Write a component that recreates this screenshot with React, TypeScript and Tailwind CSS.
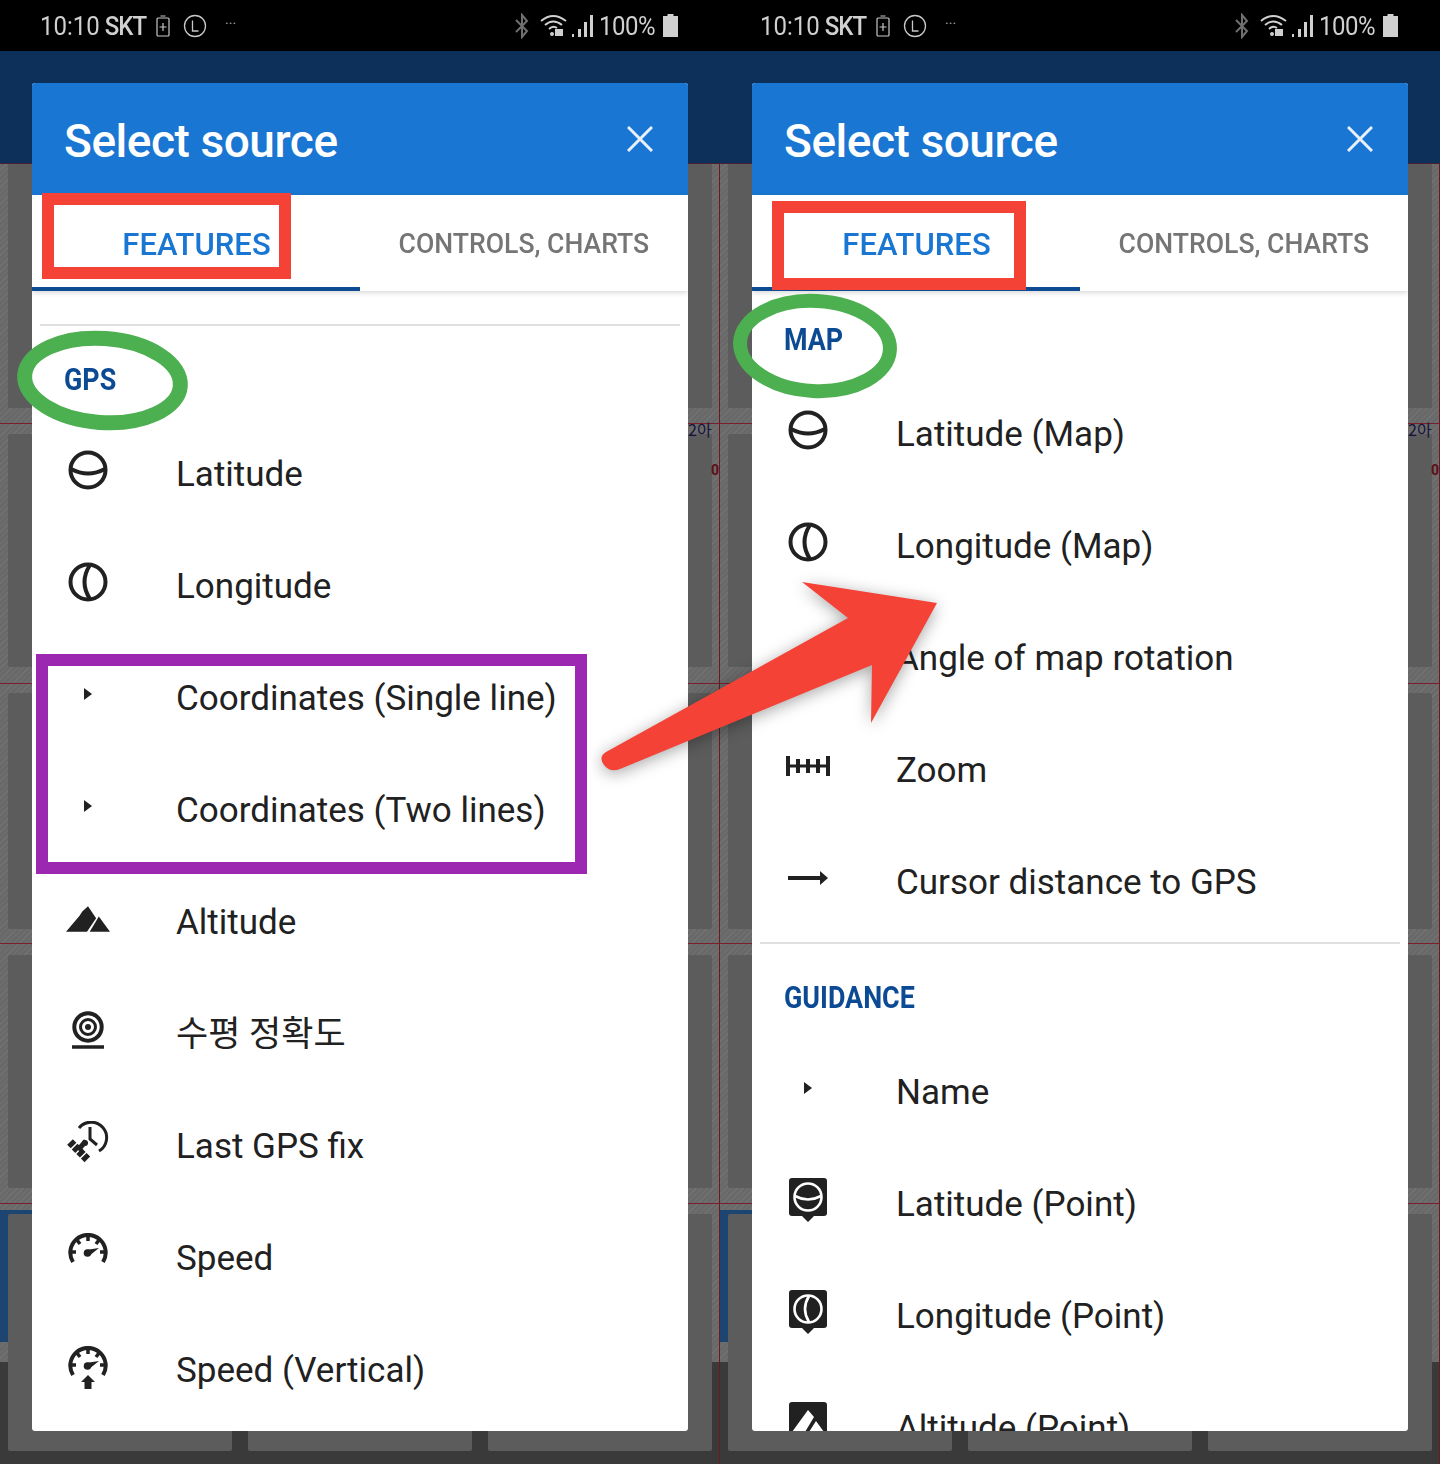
import React from "react";

const Lat = () => (
  <svg viewBox="0 0 40 40" className="w-[40px] h-[40px]" fill="none" stroke="#212121" strokeWidth="4">
    <circle cx="20" cy="20" r="17.5" />
    <path d="M3 19 Q20 28 37 19" />
  </svg>
);
const Lon = () => (
  <svg viewBox="0 0 40 40" className="w-[40px] h-[40px]" fill="none" stroke="#212121" strokeWidth="4">
    <circle cx="20" cy="20" r="17.5" />
    <path d="M22 3 Q11 20 22 37" />
  </svg>
);
const Tri = () => (
  <svg viewBox="0 0 8 12" className="w-[8px] h-[12px]"><path d="M0 0 L8 6 L0 12 Z" fill="#212121" /></svg>
);
const Alt = () => (
  <svg viewBox="0 0 130 75" className="w-[44px] h-[26px] mt-[2px]" fill="#212121">
    <path d="M0 75 L40 28 L48 15 L65 0 L89 35 L62 75 Z" />
    <path d="M97 30 L130 75 L70 75 Z" />
  </svg>
);
const Target = () => (
  <svg viewBox="0 0 32 38" className="w-[32px] h-[38px]" fill="none" stroke="#212121">
    <circle cx="16" cy="16" r="13.7" strokeWidth="4" />
    <circle cx="16" cy="16" r="7.5" strokeWidth="3" />
    <circle cx="16" cy="16" r="3" fill="#212121" stroke="none" />
    <path d="M0 36 H32" strokeWidth="3.5" />
  </svg>
);
const Fix = () => (
  <svg viewBox="0 0 42 42" className="w-[42px] h-[42px]" fill="none" stroke="#212121">
    <path d="M12 7 A15.5 15.5 0 1 1 32 30" strokeWidth="3" />
    <path d="M23 6 V18 L30 24" strokeWidth="3" />
    <path d="M3 21 L21 39" strokeWidth="8" strokeDasharray="5 1.5" />
    <path d="M11 29 L19 20" strokeWidth="5" />
    <circle cx="18" cy="22" r="3" fill="#212121" stroke="none" />
  </svg>
);
const Gauge = () => (
  <>
    <path d="M5 29 A17.7 17.7 0 1 1 35 29" strokeWidth="4" stroke="#212121" fill="none" />
    <path d="M20 3 V8 M9 7 L12 11 M31 7 L28 11 M3 19 H8 M37 19 H32" strokeWidth="3.5" stroke="#212121" fill="none" />
    <circle cx="19.5" cy="20" r="3.8" fill="#212121" />
    <path d="M18 17 L31 15 L21 23 Z" fill="#212121" />
  </>
);
const Speed = () => (
  <svg viewBox="0 0 40 44" className="w-[40px] h-[44px] mt-[3px]"><Gauge /></svg>
);
const SpeedV = () => (
  <svg viewBox="0 0 40 44" className="w-[40px] h-[44px] mt-[4px]">
    <Gauge />
    <path d="M20 29 L27 36 H23.5 V43 H16.5 V36 H13 Z" fill="#212121" />
  </svg>
);
const ZoomI = () => (
  <svg viewBox="0 0 44 20" className="w-[44px] h-[20px]" fill="#212121">
    <rect x="0" y="0" width="4" height="20" />
    <rect x="40" y="0" width="4" height="20" />
    <rect x="10" y="3" width="4" height="14" />
    <rect x="20" y="3" width="4" height="14" />
    <rect x="30" y="3" width="4" height="14" />
    <rect x="2" y="8.5" width="40" height="3" />
  </svg>
);
const Cursor = () => (
  <svg viewBox="0 0 40 14" className="w-[40px] h-[14px]" fill="#212121">
    <rect x="0" y="5" width="34" height="4" />
    <path d="M32 0 L40 7 L32 14 Z" />
  </svg>
);
const PinBase = ({ children }: { children: React.ReactNode }) => (
  <svg viewBox="0 0 38 44" className="w-[38px] h-[44px]">
    <path d="M3 0 H35 Q38 0 38 3 V35 Q38 38 35 38 H25 L19 44 L13 38 H3 Q0 38 0 35 V3 Q0 0 3 0 Z" fill="#212121" />
    {children}
  </svg>
);
const PinLat = () => (
  <PinBase>
    <g fill="none" stroke="#fff" strokeWidth="2.6">
      <circle cx="19" cy="19" r="13.5" />
      <path d="M6 18 Q19 25 32 18" />
    </g>
  </PinBase>
);
const PinLon = () => (
  <PinBase>
    <g fill="none" stroke="#fff" strokeWidth="2.6">
      <circle cx="19" cy="19" r="13.5" />
      <path d="M20 6 Q12 19 20 32" />
    </g>
  </PinBase>
);
const PinAlt = () => (
  <PinBase>
    <path d="M3 30 L19 8 L25 15 L16 30 Z M27 19 L35 30 L20 30 Z" fill="#fff" />
  </PinBase>
);

type Item = { icon: React.ReactNode; label: string };

const Row = ({ icon, label }: Item) => (
  <div className="flex items-center h-[112px] shrink-0">
    <div className="w-[112px] flex justify-center items-center -mt-[5px] shrink-0">{icon}</div>
    <span className="ml-[32px] text-[35px] leading-[44px] text-[#212121] whitespace-nowrap mt-[5px]">{label}</span>
  </div>
);

const SectionLabel = ({ text, className }: { text: string; className: string }) => (
  <div className={`flex items-end pb-[19px] pl-[32px] shrink-0 ${className}`}>
    <span className="inline-block origin-left scale-x-[0.84] text-[32px] leading-[36px] font-bold text-[#0d4a94] whitespace-nowrap">{text}</span>
  </div>
);

const Divider = () => <div className="h-[2px] mx-[8px] bg-[#e0e0e0] shrink-0" />;

const MapBackdrop = () => (
  <div className="absolute inset-0 overflow-hidden bg-[repeating-linear-gradient(135deg,#727272_0px,#727272_1px,#696969_1px,#696969_4px)]">
    <div className="absolute left-0 top-[1159px] w-[680px] h-[132px] bg-[#1c4571]" />
    <div className="absolute left-0 right-0 top-[1311px] bottom-0 bg-[#3a3a3a]" />
    <div className="absolute left-0 right-0 top-[372px] h-px bg-[#7a1f2b]" />
    <div className="absolute left-0 right-0 top-[632px] h-px bg-[#7a1f2b]" />
    <div className="absolute left-0 right-0 top-[892px] h-px bg-[#7a1f2b]" />
    <div className="absolute left-0 right-0 top-[1152px] h-px bg-[#7a1f2b]" />
    <div className="absolute top-0 bottom-0 right-[0px] w-px bg-[#6e1822]" />
    <div className="relative h-[113px] bg-[#0c305a] border-b border-[#4a2030]" />
    <div className="relative ml-[8px] w-[704px] grid grid-cols-3 gap-x-[16px] gap-y-[26px] grid-rows-[244px_233px_236px_233px_237px]">
      {Array.from({ length: 15 }).map((_, i) => (
        <div key={i} className="bg-[#5c5c5c] rounded-[2px]" />
      ))}
    </div>
    <span className="absolute left-[688px] top-[368px] text-[16px] leading-[20px] text-[#14143c] [font-family:'Noto_Sans_CJK_KR',sans-serif]">2아</span>
    <span className="absolute left-[711px] top-[410px] text-[14px] leading-[18px] font-bold text-[#5c1018]">0</span>
  </div>
);

const StatusBar = () => (
  <div className="h-[51px] bg-black flex items-center pl-[40px] pr-[42px] text-[#d0d0d0] shrink-0 text-[24px]">
    <span className="leading-[30px] scale-y-110">10:10</span>
    <span className="ml-[5px] leading-[30px] font-medium tracking-[-1px] scale-y-110">SKT</span>
    <svg viewBox="0 0 14 22" className="w-[14px] h-[22px] ml-[10px]" fill="none" stroke="#c8c8c8" strokeWidth="1.2">
      <rect x="1" y="3" width="12" height="18" rx="1" />
      <path d="M4.5 1 H9.5 M7 8 V16 M3.5 12 H10.5" />
    </svg>
    <svg viewBox="0 0 24 24" className="w-[24px] h-[24px] ml-[13px]" fill="none" stroke="#c8c8c8" strokeWidth="1.3">
      <circle cx="12" cy="12" r="10.5" />
      <path d="M9.5 6.5 V17 H15.5" />
    </svg>
    <span className="ml-[18px] text-[#a0a0a0] text-[14px] leading-[14px] -mt-[4px]">···</span>
    <div className="flex-1" />
    <svg viewBox="0 0 14 26" className="w-[14px] h-[26px]" fill="none" stroke="#707070" strokeWidth="2">
      <path d="M1 7 L12 18 L7 24 V2 L12 8 L1 19" />
    </svg>
    <svg viewBox="0 0 28 26" className="w-[28px] h-[26px] ml-[11px]" fill="none" stroke="#d0d0d0" strokeWidth="2">
      <path d="M1 8 Q13 -2 26 8 M5 12 Q13 5 22 12 M9 16 Q13 12 17 15" />
      <rect x="15" y="16" width="8" height="7" fill="#d0d0d0" stroke="none" />
      <circle cx="12" cy="21" r="2" fill="#d0d0d0" stroke="none" />
    </svg>
    <svg viewBox="0 0 22 24" className="w-[22px] h-[24px] ml-[4px]" fill="#d0d0d0">
      <rect x="0" y="20" width="2" height="3" />
      <rect x="6" y="15" width="3" height="8" />
      <rect x="12" y="8" width="3" height="15" />
      <rect x="18" y="1" width="3" height="22" />
    </svg>
    <span className="ml-[5px] leading-[30px] tracking-[-0.5px] scale-y-110">100%</span>
    <svg viewBox="0 0 15 23" className="w-[15px] h-[23px] ml-[8px]" fill="#d0d0d0">
      <path d="M4.5 0 H10.5 V2 H15 V23 H0 V2 H4.5 Z" />
    </svg>
  </div>
);

const Dialog = ({ children }: { children: React.ReactNode }) => (
  <div className="relative isolate ml-[32px] mt-[32px] w-[656px] h-[1348px] flex flex-col bg-white rounded-[3px] overflow-hidden">
    <div className="h-[112px] bg-[#1976d2] flex items-center justify-between pl-[32px] pr-[35px] pt-[4px] shrink-0">
      <span className="text-[46px] leading-[56px] font-medium text-white tracking-[-0.45px]">Select source</span>
      <svg viewBox="0 0 26 26" className="w-[26px] h-[26px] -mt-[4px]" fill="none" stroke="#e8f1fb" strokeWidth="3">
        <path d="M1 1 L25 25 M25 1 L1 25" />
      </svg>
    </div>
    <div className="relative h-[96px] flex shrink-0 shadow-[0_2px_5px_rgba(0,0,0,0.15)] z-10 bg-white">
      <div className="w-[328px] flex items-center justify-center border-b-[4px] border-[#0d4a94]">
        <span className="mt-[6px] text-[32px] leading-[40px] font-medium text-[#1976d2] scale-x-[0.97] whitespace-nowrap">FEATURES</span>
      </div>
      <div className="w-[328px] flex items-center justify-center">
        <span className="mt-[2px] text-[28px] leading-[40px] font-medium text-[#757575] scale-x-[0.95] whitespace-nowrap">CONTROLS, CHARTS</span>
      </div>
    </div>
    <div className="flex-1 flex flex-col overflow-hidden">{children}</div>
  </div>
);

const Phone = ({ children }: { children: React.ReactNode }) => (
  <div className="flex flex-col h-[1464px] w-[720px]">
    <StatusBar />
    <div className="relative flex-1">
      <MapBackdrop />
      <Dialog>{children}</Dialog>
    </div>
  </div>
);

const gps: Item[] = [
  { icon: <Lat />, label: "Latitude" },
  { icon: <Lon />, label: "Longitude" },
  { icon: <Tri />, label: "Coordinates (Single line)" },
  { icon: <Tri />, label: "Coordinates (Two lines)" },
  { icon: <Alt />, label: "Altitude" },
  { icon: <Target />, label: "수평 정확도" },
  { icon: <Fix />, label: "Last GPS fix" },
  { icon: <Speed />, label: "Speed" },
  { icon: <SpeedV />, label: "Speed (Vertical)" },
];
const map: Item[] = [
  { icon: <Lat />, label: "Latitude (Map)" },
  { icon: <Lon />, label: "Longitude (Map)" },
  { icon: null, label: "Angle of map rotation" },
  { icon: <ZoomI />, label: "Zoom" },
  { icon: <Cursor />, label: "Cursor distance to GPS" },
];
const guidance: Item[] = [
  { icon: <Tri />, label: "Name" },
  { icon: <PinLat />, label: "Latitude (Point)" },
  { icon: <PinLon />, label: "Longitude (Point)" },
  { icon: <PinAlt />, label: "Altitude (Point)" },
];

export default function App() {
  return (
    <div className="relative w-[1440px] h-[1464px] overflow-hidden flex bg-black [font-family:Roboto,'Noto_Sans_CJK_KR',sans-serif]">
      <Phone>
        <div className="h-[33px] shrink-0" />
        <Divider />
        <SectionLabel text="GPS" className="h-[90px]" />
        {gps.map((r) => (
          <Row key={r.label} {...r} />
        ))}
      </Phone>
      <Phone>
        <SectionLabel text="MAP" className="h-[85px]" />
        {map.map((r) => (
          <Row key={r.label} {...r} />
        ))}
        <div className="h-[6px] shrink-0" />
        <Divider />
        <SectionLabel text="GUIDANCE" className="h-[90px]" />
        {guidance.map((r) => (
          <Row key={r.label} {...r} />
        ))}
      </Phone>

      <div className="absolute left-[42px] top-[193px] w-[249px] h-[86px] border-[12px] border-[#f44336]" />
      <div className="absolute left-[772px] top-[201px] w-[254px] h-[89px] border-[12px] border-[#f44336]" />
      <div className="absolute left-[36px] top-[654px] w-[551px] h-[220px] border-[12px] border-[#9c27b0]" />
      <svg className="absolute left-0 top-0 w-[1440px] h-[1464px] pointer-events-none" viewBox="0 0 1440 1464" fill="none">
        <ellipse cx="102.5" cy="380.5" rx="78" ry="42" stroke="#4caf50" strokeWidth="15" transform="rotate(4 102.5 380.5)" />
        <ellipse cx="815" cy="346" rx="75" ry="45" stroke="#4caf50" strokeWidth="14" transform="rotate(3 815 346)" />
      </svg>
      <svg className="absolute left-0 top-0 w-[1440px] h-[1464px] pointer-events-none drop-shadow-[0_3px_8px_rgba(0,0,0,0.35)]" viewBox="0 0 1440 1464">
        <path
          d="M802 582 L937 603 L871 723 L872 665 L620 769 Q610 773 604 765 Q598 757 606 752 L848 618 Z"
          fill="#f44336"
        />
      </svg>
    </div>
  );
}
